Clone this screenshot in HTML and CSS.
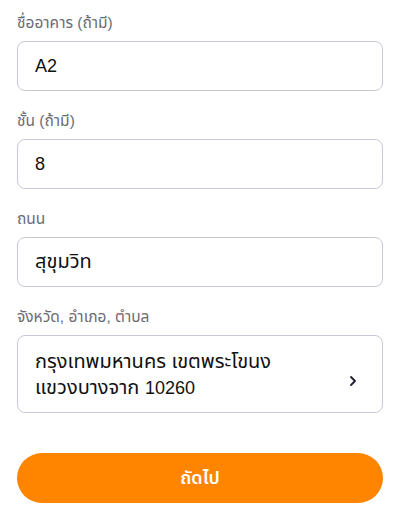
FILE: index.html
```html
<!DOCTYPE html>
<html lang="th">
<head>
    <meta charset="UTF-8">
    <meta name="viewport" content="width=device-width, initial-scale=1.0">
    <title>ที่อยู่</title>
    <link rel="stylesheet" href="styles.css">
</head>
<body>
    <form class="address-form">
        <div class="form-group">
            <label class="field-label">ชื่ออาคาร (ถ้ามี)</label>
            <div class="field-box"><span class="latin">A2</span></div>
        </div>

        <div class="form-group">
            <label class="field-label">ชั้น (ถ้ามี)</label>
            <div class="field-box"><span class="latin">8</span></div>
        </div>

        <div class="form-group">
            <label class="field-label">ถนน</label>
            <div class="field-box">สุขุมวิท</div>
        </div>

        <div class="form-group">
            <label class="field-label">จังหวัด, อำเภอ, ตำบล</label>
            <div class="field-box field-select">
                <span class="select-text">กรุงเทพมหานคร เขตพระโขนง<br>แขวงบางจาก <span class="latin">10260</span></span>
                <svg class="chevron" width="10" height="12" viewBox="0 0 10 12">
                    <path d="M3 2 L7 6 L3 10" fill="none" stroke="#1c1c2e" stroke-width="1.8" stroke-linecap="round" stroke-linejoin="round"/>
                </svg>
            </div>
        </div>

        <button type="button" class="next-btn">ถัดไป</button>
    </form>
</body>
</html>
```

FILE: styles.css
```css
body {
    margin: 0;
    background-color: #ffffff;
    font-family: 'Liberation Sans', 'Noto Sans Thai', 'Noto Sans', sans-serif;
    color: #111111;
}
.address-form {
    padding: 13px 17px 0 17px;
}
.form-group {
    margin-bottom: 20px;
}
.field-label {
    display: block;
    font-size: 15.5px;
    line-height: 20px;
    color: #6b6b73;
    margin-bottom: 8px;
}
.field-box {
    box-sizing: border-box;
    height: 50px;
    border: 1px solid #c9c9d3;
    border-radius: 8px;
    padding: 0 17px;
    display: flex;
    align-items: center;
    font-size: 20px;
}
.latin {
    font-size: 18px;
}
.field-select {
    height: 78px;
    justify-content: space-between;
}
.select-text {
    line-height: 26px;
}
.chevron {
    margin-right: 7px;
    margin-top: 14px;
}
.next-btn {
    display: block;
    width: 100%;
    height: 50px;
    margin-top: 40px;
    border: none;
    border-radius: 25px;
    background-color: #ff8500;
    color: #ffffff;
    font-family: inherit;
    font-size: 18px;
    font-weight: 600;
}
```
